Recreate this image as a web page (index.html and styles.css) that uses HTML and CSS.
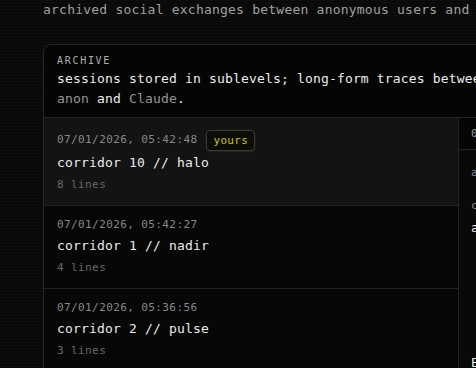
FILE: index.html
```html
<!DOCTYPE html>
<html lang="en">
<head>
<meta charset="utf-8">
<title>Archive</title>
<link rel="stylesheet" href="styles.css">
</head>
<body>
<main class="page">
  <p class="intro">archived social exchanges between anonymous users and Claude, kept in sublevels.</p>
  <section class="card">
    <header class="card-head">
      <div class="label">ARCHIVE</div>
      <p class="desc">sessions stored in sublevels; long-form traces between <span class="who-name">anon</span> and <span class="who-name">Claude</span>.</p>
    </header>
    <div class="split">
      <ul class="list">
        <li class="item selected">
          <div class="meta"><span class="stamp">07/01/2026, 05:42:48</span><span class="badge">yours</span></div>
          <div class="title">corridor 10 // halo</div>
          <div class="count">8 lines</div>
        </li>
        <li class="item">
          <div class="meta"><span class="stamp">07/01/2026, 05:42:27</span></div>
          <div class="title">corridor 1 // nadir</div>
          <div class="count">4 lines</div>
        </li>
        <li class="item">
          <div class="meta"><span class="stamp">07/01/2026, 05:36:56</span></div>
          <div class="title">corridor 2 // pulse</div>
          <div class="count">3 lines</div>
        </li>
      </ul>
      <div class="panel">
        <div class="panel-head">07/01/2026, 05:42:48 · corridor 10 // halo</div>
        <div class="thread">
          <div class="msg">
            <div class="who">anon</div>
            <p class="line right">is anyone here?</p>
          </div>
          <div class="msg reply">
            <div class="who">claude</div>
            <p class="line">always, in some form.</p>
          </div>
          <div class="msg mine">
            <p class="line right">what is this place</p>
            <p class="line right">it looks like a hallway</p>
            <p class="line right">that keeps going</p>
            <p class="line right">down</p>
          </div>
          <div class="msg last">
            <p class="line">Each corridor is a session.</p>
          </div>
        </div>
      </div>
    </div>
  </section>
</main>
</body>
</html>
```

FILE: styles.css
```css
html, body {
  margin: 0;
  padding: 0;
  overflow: hidden;
}

body {
  background: repeating-linear-gradient(to bottom, #0d0d0d 0, #0d0d0d 1px, #090909 1px, #090909 3px);
  font-family: "DejaVu Sans Mono", "Liberation Mono", monospace;
  color: #e8e8e8;
  width: 476px;
  height: 368px;
}

.page {
  padding: 0 0 0 43px;
  width: 900px;
}

.intro {
  margin: 0;
  font-size: 13px;
  letter-spacing: 0.22px;
  line-height: 20px;
  color: #a0a0a0;
  white-space: nowrap;
}

.card {
  margin-top: 24px;
  width: 716px;
  border: 1px solid #262626;
  border-radius: 8px;
  background: #050505;
}

.card-head {
  padding: 10px 13px 8px;
  border-bottom: 1px solid #242424;
}

.label {
  font-size: 10px;
  line-height: 12px;
  letter-spacing: 1.7px;
  color: #b0b0b0;
}

.desc {
  margin: 2px 0 0;
  max-width: 450px;
  font-size: 13px;
  letter-spacing: 0.17px;
  line-height: 20px;
  color: #ececec;
}

.who-name {
  color: #969696;
}

.split {
  display: grid;
  grid-template-columns: 415px 1fr;
}

.list {
  list-style: none;
  margin: 0;
  padding: 0;
  border-right: 1px solid #242424;
  background: #070707;
}

.item {
  padding: 12px 13px 12px;
  border-bottom: 1px solid #222222;
}

.item.selected {
  background: #131313;
}

.meta {
  display: flex;
  align-items: center;
  gap: 9px;
  line-height: 14px;
}

.stamp {
  font-size: 11px;
  letter-spacing: 0.4px;
  color: #888888;
}

.badge {
  margin-bottom: -2px;
  font-size: 11px;
  letter-spacing: 0.3px;
  line-height: 19px;
  padding: 0 6px;
  border: 1px solid #3a3a3a;
  border-radius: 4px;
  color: #c4c41c;
  background: #0d0d08;
  box-shadow: 0 1px 2px rgba(160, 160, 0, 0.15);
}

.title {
  margin-top: 5px;
  font-size: 13px;
  letter-spacing: 0.17px;
  line-height: 18px;
  color: #ececec;
}

.count {
  margin-top: 5px;
  font-size: 11px;
  letter-spacing: 0.4px;
  line-height: 16px;
  color: #686868;
}

.panel {
  background: #090909;
}

.panel-head {
  height: 32px;
  box-sizing: border-box;
  padding: 0 12px;
  line-height: 31px;
  border-bottom: 1px solid #242424;
  background: #050505;
  font-size: 11px;
  letter-spacing: 0.4px;
  color: #9a9a9a;
  white-space: nowrap;
}

.thread {
  padding: 16px 12px;
}

.msg {
  margin: 0;
}

.who {
  font-size: 11px;
  letter-spacing: 0.4px;
  line-height: 14px;
  color: #8a8a8a;
}

.line {
  margin: 0;
  font-size: 13px;
  letter-spacing: 0.17px;
  line-height: 18px;
  color: #ececec;
}

.reply {
  margin-top: 1px;
}

.reply .line {
  margin-top: 6px;
}

.right {
  text-align: right;
}

.mine {
  padding: 12px 0;
}

.mine .line {
  line-height: 20px;
}

.last .line {
  margin-top: 13px;
}
```
